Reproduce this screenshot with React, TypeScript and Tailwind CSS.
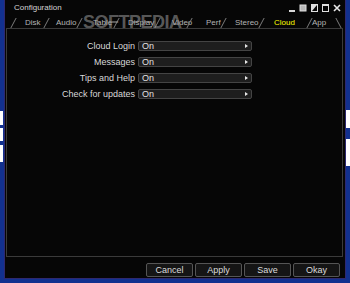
import React from 'react';

const tabs = [
  { name: 'Disk', w: 33, pad: 11 },
  { name: 'Audio', w: 33, pad: 9 },
  { name: 'Table', w: 37, pad: 13 },
  { name: 'Display', w: 41, pad: 11 },
  { name: 'Video', w: 32, pad: 14 },
  { name: 'Perf', w: 34, pad: 16 },
  { name: 'Stereo', w: 38, pad: 11 },
  { name: 'Cloud', w: 48, pad: 12 },
  { name: 'App', w: 29, pad: 2 },
];

const rows = ['Cloud Login', 'Messages', 'Tips and Help', 'Check for updates'];

function Sep({ back }: { back?: boolean }) {
  return (
    <span
      className={
        'w-px h-[10px] shrink-0 bg-[#7c7c7c] ' + (back ? 'skew-x-[28deg]' : '-skew-x-[28deg]')
      }
    />
  );
}

function WindowIcons() {
  return (
    <svg width="52" height="8" viewBox="0 0 52 8" className="shrink-0">
      {/* minimize */}
      <rect x="0" y="6" width="6" height="2" fill="#d8d8d8" />
      {/* filled square */}
      <rect x="11" y="1" width="6" height="6" fill="#b8b8b8" stroke="#e0e0e0" strokeWidth="1" />
      {/* half square */}
      <rect x="22.5" y="0.5" width="6" height="7" fill="none" stroke="#e0e0e0" strokeWidth="1" />
      <polygon points="23,1 28,1 23,7" fill="#e0e0e0" />
      {/* maximize */}
      <rect x="33.5" y="0.5" width="6" height="7" fill="none" stroke="#e0e0e0" strokeWidth="1" />
      <rect x="33" y="0" width="7" height="2" fill="#e0e0e0" />
      {/* close */}
      <path d="M45 1 L51 7 M51 1 L45 7" stroke="#e8e8e8" strokeWidth="1.6" />
    </svg>
  );
}

function Field() {
  return (
    <div className="h-[10px] w-[114px] bg-[#1e1e1e] border border-[#444] rounded-[2px] flex items-center justify-between pl-[3px] pr-[3px]">
      <span className="text-[9px] leading-none text-[#e2e2e2]">On</span>
      <svg width="3" height="4" viewBox="0 0 3 4">
        <polygon points="0,0 3,2 0,4" fill="#e8e8e8" />
      </svg>
    </div>
  );
}

export default function App() {
  return (
    <div className="relative w-[350px] h-[283px] overflow-hidden bg-[#12318f] flex pl-[4px] pr-[4px] pb-[4px] font-['Liberation_Sans',Arial,sans-serif]">
      {/* background letters showing at the window edges */}
      <div className="absolute left-0 top-[111px] w-[3px] h-[14px] bg-white" />
      <div className="absolute left-0 top-[128px] w-[3px] h-[13px] bg-white" />
      <div className="absolute left-0 top-[145px] w-[3px] h-[17px] bg-white" />
      <div className="absolute right-0 top-[110px] w-[4px] h-[18px] bg-white" />
      <div className="absolute right-0 top-[139px] w-[4px] h-[27px] bg-white" />

      <div className="flex-1 flex flex-col bg-[#060606] border-l border-r border-b border-[#2e2870]">
        {/* title bar */}
        <div className="h-[17px] flex items-start justify-between pt-[3px] pl-[9px] pr-[4px]">
          <span className="text-[8px] leading-[10px] text-[#d4d4d4]">Configuration</span>
          <div className="pt-[1px]">
            <WindowIcons />
          </div>
        </div>

        {/* tab strip */}
        <div className="relative h-[11px] flex items-center pl-[8px]">
          {tabs.map((t) => (
            <div key={t.name} className="flex items-center shrink-0" style={{ width: t.w }}>
              <Sep />
              <span
                className={
                  'text-[8px] leading-[11px] whitespace-nowrap ' +
                  (t.name === 'Cloud' ? 'text-[#ffff00]' : 'text-[#b4b4b4]')
                }
                style={{ paddingLeft: t.pad }}
              >
                {t.name}
              </span>
            </div>
          ))}
          <Sep back />
          <span className="absolute left-[78px] top-[-3px] text-[18px] leading-[16px] font-bold tracking-[-0.5px] text-[#a0a0a0]/55">
            SOFTPEDIA
          </span>
        </div>

        {/* panel */}
        <div className="flex-1 ml-[1px] mr-[2px] border border-[#3a3a3a] pt-[12px]">
          <div className="grid grid-cols-[128px_114px] gap-x-[3px] gap-y-[6px]">
            {rows.map((r) => (
              <React.Fragment key={r}>
                <div className="h-[10px] flex items-center justify-end text-[9px] leading-none text-[#d8d8d8] whitespace-nowrap">
                  {r}
                </div>
                <Field />
              </React.Fragment>
            ))}
          </div>
        </div>

        {/* buttons */}
        <div className="flex justify-end gap-[2px] mt-[6px] pr-[5px] pb-[1px]">
          {['Cancel', 'Apply', 'Save', 'Okay'].map((b) => (
            <button
              key={b}
              className="w-[47px] h-[14px] bg-[#151515] border border-[#555] rounded-[2px] text-[9px] leading-none text-[#dcdcdc]"
            >
              {b}
            </button>
          ))}
        </div>
      </div>
    </div>
  );
}
